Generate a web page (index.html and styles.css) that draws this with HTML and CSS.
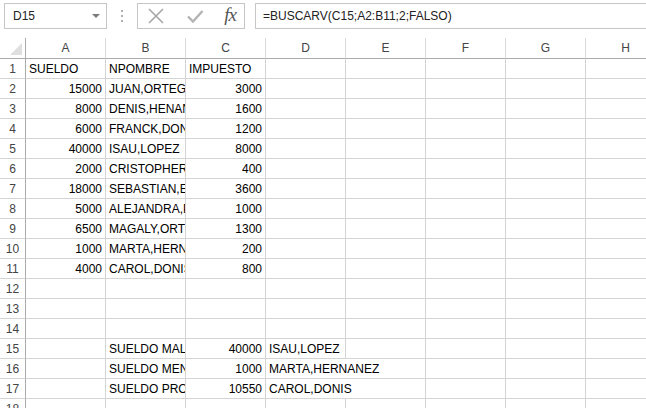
FILE: index.html
```html
<!DOCTYPE html>
<html lang="es">
<head>
  <meta charset="UTF-8" />
  <title>Libro1 - Excel</title>
  <link rel="stylesheet" href="styles.css">
</head>
<body>

  <!-- barra de formulas -->
  <div class="fbar">
    <div class="namebox">
      <span>D15</span>
      <span class="drop"></span>
    </div>
    <div class="grip"><i></i><i></i><i></i></div>
    <div class="fbtns">
      <svg width="18" height="18" viewBox="0 0 18 18"><path d="M2 2 L16 16 M16 2 L2 16" stroke="#a6a6a6" stroke-width="1.6" fill="none"/></svg>
      <svg width="18" height="18" viewBox="0 0 18 18"><path d="M2 9.5 L7 14.5 L16.5 4" stroke="#b3b3b3" stroke-width="2.4" fill="none"/></svg>
      <span class="fx">fx</span>
    </div>
    <div class="finput">=BUSCARV(C15;A2:B11;2;FALSO)</div>
  </div>

  <!-- hoja -->
  <div class="sheet">
    <div class="row head">
      <div class="corner"><span></span></div>
      <div class="ch">A</div><div class="ch">B</div><div class="ch">C</div><div class="ch">D</div>
      <div class="ch">E</div><div class="ch">F</div><div class="ch">G</div><div class="ch">H</div>
    </div>
    <div class="row">
      <div class="rh">1</div>
      <div class="c">SUELDO</div><div class="c">NPOMBRE</div><div class="c">IMPUESTO</div><div class="c"></div>
      <div class="c"></div><div class="c"></div><div class="c"></div><div class="c"></div>
    </div>
    <div class="row">
      <div class="rh">2</div>
      <div class="c n">15000</div><div class="c">JUAN,ORTEGA</div><div class="c n">3000</div><div class="c"></div>
      <div class="c"></div><div class="c"></div><div class="c"></div><div class="c"></div>
    </div>
    <div class="row">
      <div class="rh">3</div>
      <div class="c n">8000</div><div class="c">DENIS,HENANDEZ</div><div class="c n">1600</div><div class="c"></div>
      <div class="c"></div><div class="c"></div><div class="c"></div><div class="c"></div>
    </div>
    <div class="row">
      <div class="rh">4</div>
      <div class="c n">6000</div><div class="c">FRANCK,DONIS</div><div class="c n">1200</div><div class="c"></div>
      <div class="c"></div><div class="c"></div><div class="c"></div><div class="c"></div>
    </div>
    <div class="row">
      <div class="rh">5</div>
      <div class="c n">40000</div><div class="c">ISAU,LOPEZ</div><div class="c n">8000</div><div class="c"></div>
      <div class="c"></div><div class="c"></div><div class="c"></div><div class="c"></div>
    </div>
    <div class="row">
      <div class="rh">6</div>
      <div class="c n">2000</div><div class="c">CRISTOPHER,RAMOS</div><div class="c n">400</div><div class="c"></div>
      <div class="c"></div><div class="c"></div><div class="c"></div><div class="c"></div>
    </div>
    <div class="row">
      <div class="rh">7</div>
      <div class="c n">18000</div><div class="c">SEBASTIAN,ESTRADA</div><div class="c n">3600</div><div class="c"></div>
      <div class="c"></div><div class="c"></div><div class="c"></div><div class="c"></div>
    </div>
    <div class="row">
      <div class="rh">8</div>
      <div class="c n">5000</div><div class="c">ALEJANDRA,PEREZ</div><div class="c n">1000</div><div class="c"></div>
      <div class="c"></div><div class="c"></div><div class="c"></div><div class="c"></div>
    </div>
    <div class="row">
      <div class="rh">9</div>
      <div class="c n">6500</div><div class="c">MAGALY,ORTIZ</div><div class="c n">1300</div><div class="c"></div>
      <div class="c"></div><div class="c"></div><div class="c"></div><div class="c"></div>
    </div>
    <div class="row">
      <div class="rh">10</div>
      <div class="c n">1000</div><div class="c">MARTA,HERNANEZ</div><div class="c n">200</div><div class="c"></div>
      <div class="c"></div><div class="c"></div><div class="c"></div><div class="c"></div>
    </div>
    <div class="row">
      <div class="rh">11</div>
      <div class="c n">4000</div><div class="c">CAROL,DONIS</div><div class="c n">800</div><div class="c"></div>
      <div class="c"></div><div class="c"></div><div class="c"></div><div class="c"></div>
    </div>
    <div class="row">
      <div class="rh">12</div>
      <div class="c"></div><div class="c"></div><div class="c"></div><div class="c"></div>
      <div class="c"></div><div class="c"></div><div class="c"></div><div class="c"></div>
    </div>
    <div class="row">
      <div class="rh">13</div>
      <div class="c"></div><div class="c"></div><div class="c"></div><div class="c"></div>
      <div class="c"></div><div class="c"></div><div class="c"></div><div class="c"></div>
    </div>
    <div class="row">
      <div class="rh">14</div>
      <div class="c"></div><div class="c"></div><div class="c"></div><div class="c"></div>
      <div class="c"></div><div class="c"></div><div class="c"></div><div class="c"></div>
    </div>
    <div class="row">
      <div class="rh">15</div>
      <div class="c"></div><div class="c">SUELDO MALTO</div><div class="c n">40000</div><div class="c">ISAU,LOPEZ</div>
      <div class="c"></div><div class="c"></div><div class="c"></div><div class="c"></div>
    </div>
    <div class="row">
      <div class="rh">16</div>
      <div class="c"></div><div class="c">SUELDO MENOR</div><div class="c n">1000</div><div class="c span2">MARTA,HERNANEZ</div>
      <div class="c"></div><div class="c"></div><div class="c"></div>
    </div>
    <div class="row">
      <div class="rh">17</div>
      <div class="c"></div><div class="c">SUELDO PROMEDIO</div><div class="c n">10550</div><div class="c span2">CAROL,DONIS</div>
      <div class="c"></div><div class="c"></div><div class="c"></div>
    </div>
    <div class="row">
      <div class="rh">18</div>
      <div class="c"></div><div class="c"></div><div class="c"></div><div class="c"></div>
      <div class="c"></div><div class="c"></div><div class="c"></div><div class="c"></div>
    </div>
  </div>

</body>
</html>
```

FILE: styles.css
```css
body {
  margin:0; padding:0;
  background:#fff;
  font-family: 'Liberation Sans', Arial, sans-serif;
  overflow:hidden;
  width:646px; height:408px;
}

/* barra de formulas */
.fbar {
  height:38px;
  display:flex;
  align-items:flex-start;
  padding-top:3px;
  box-sizing:border-box;
}
.namebox {
  margin-left:4px;
  width:103px; height:26px;
  box-sizing:border-box;
  border:1px solid #c6c6c6;
  display:flex;
  align-items:center;
  justify-content:space-between;
  padding:0 6px 0 8px;
  font-size:12px;
  color:#222;
}
.drop {
  width:0; height:0;
  border-left:4px solid transparent;
  border-right:4px solid transparent;
  border-top:4px solid #7a7a7a;
}
.grip {
  width:30px; height:26px;
  display:flex; flex-direction:column;
  align-items:center; justify-content:center;
  gap:3px;
}
.grip i {
  width:2px; height:2px;
  background:#b0b0b0;
}
.fbtns {
  width:108px; height:26px;
  box-sizing:border-box;
  border:1px solid #c6c6c6;
  display:flex;
  align-items:center;
  justify-content:space-between;
  padding:0 8px 0 9px;
}
.fx {
  font-family:'Liberation Serif', serif;
  font-style:italic;
  font-size:19px;
  color:#555;
  letter-spacing:-1px;
  line-height:1;
  padding-bottom:3px;
}
.finput {
  margin-left:10px;
  flex:1;
  height:26px;
  box-sizing:border-box;
  border:1px solid #c6c6c6;
  border-right:none;
  padding-left:7px;
  line-height:24px;
  font-size:12px;
  color:#222;
}

/* hoja */
.sheet { font-size:12px; }
.row {
  display:grid;
  grid-template-columns:26px repeat(8, 80px);
  height:20px;
}
.row.head { height:21px; }
.row > div {
  box-sizing:border-box;
  border-right:1px solid #d4d4d4;
  border-bottom:1px solid #d4d4d4;
  white-space:nowrap;
  overflow:hidden;
  line-height:20px;
}
.c { padding:0 3px; color:#000; }
.c.n { text-align:right; }
.c.span2 { grid-column:span 2; }

.head > div {
  border-bottom-color:#ababab;
  border-right-color:#dadada;
  text-align:center;
  color:#444;
  line-height:21px;
}
.corner {
  position:relative;
  border-right-color:#ababab !important;
}
.corner span {
  position:absolute;
  right:3px; bottom:3px;
  width:0; height:0;
  border-left:12px solid transparent;
  border-bottom:12px solid #dfdfdf;
}
.rh {
  border-right-color:#ababab !important;
  border-bottom-color:#d4d4d4;
  text-align:center;
  color:#444;
}
```
